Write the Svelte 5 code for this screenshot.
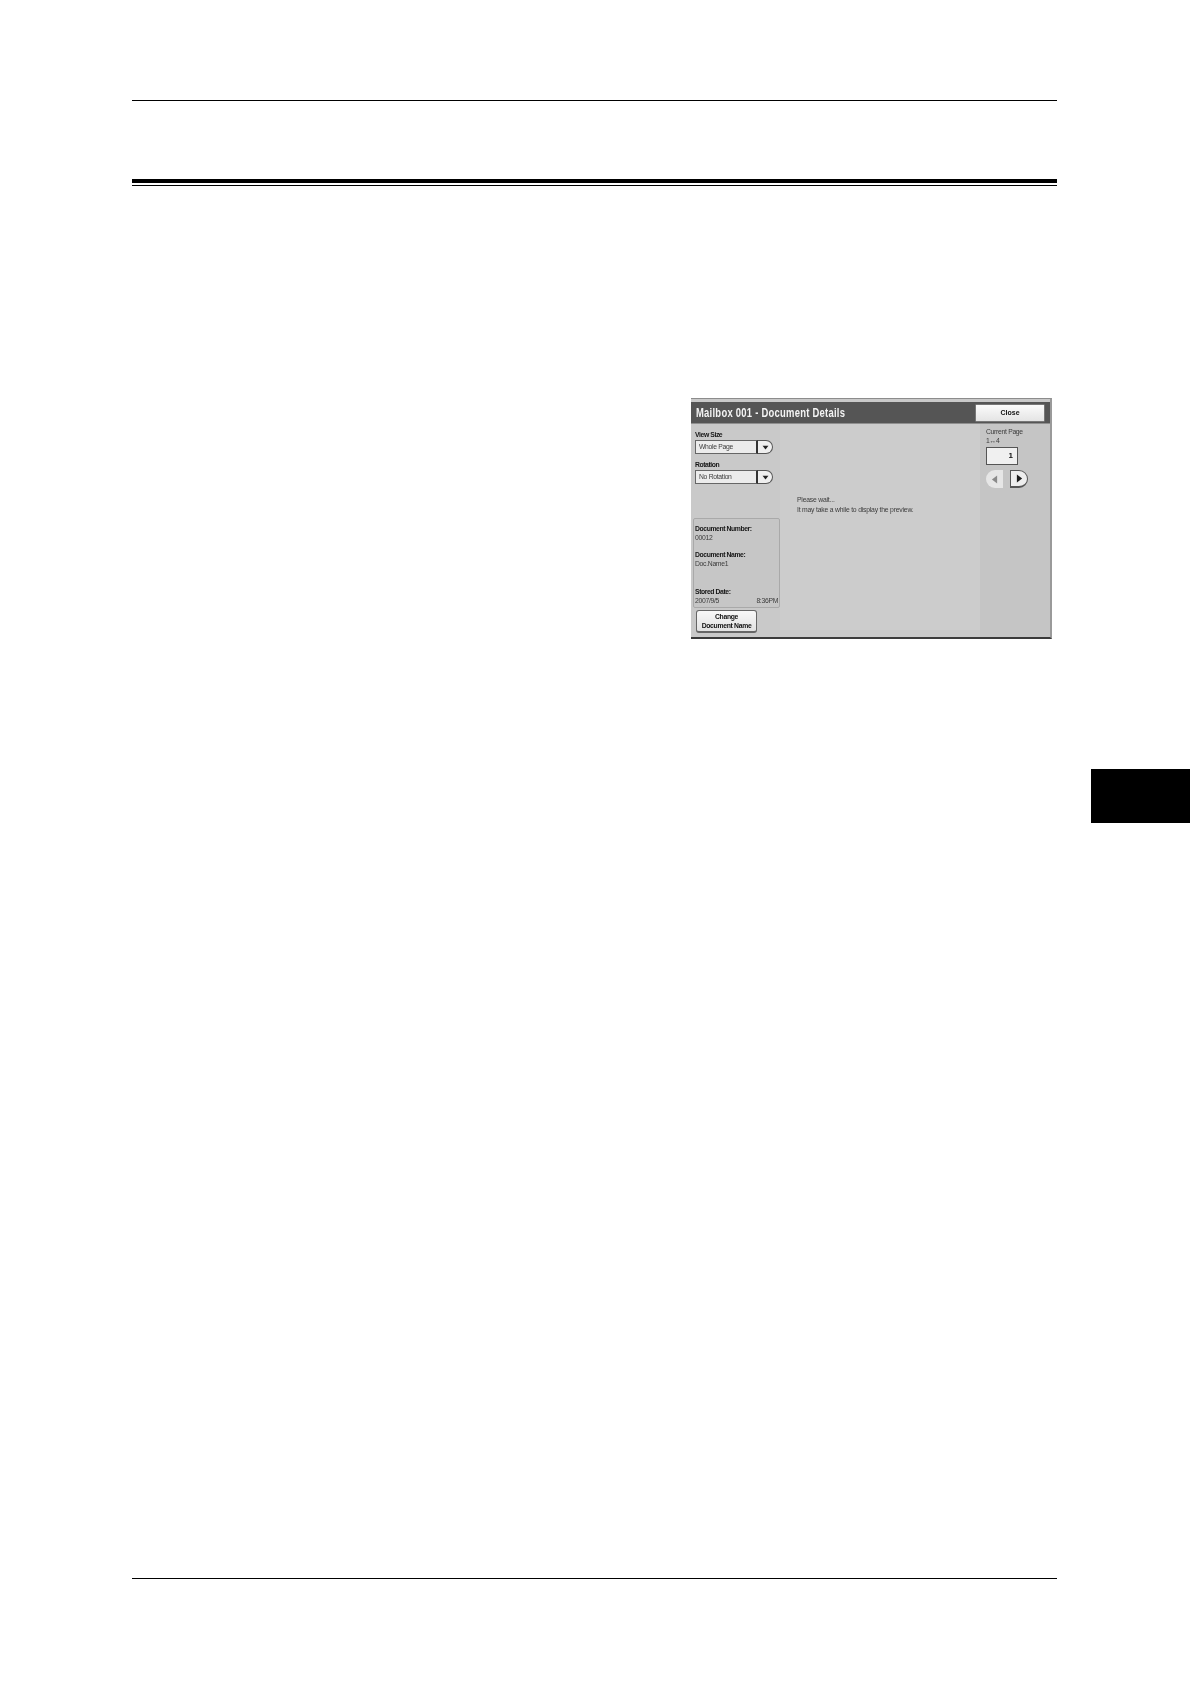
<script>
	const infoRows = [
		{ label: 'Document Number:', value: '00012', gap: 'gapSmall' },
		{ label: 'Document Name:', value: 'Doc.Name1', gap: 'gapLarge' }
	];
	const dropdowns = [
		{ label: 'View Size', value: 'Whole Page' },
		{ label: 'Rotation', value: 'No Rotation' }
	];
</script>

<div class="page">
	<div class="rule top"></div>
	<div class="rule heavy"></div>
	<div class="rule hair"></div>

	<div class="panel">
		<div class="titlebar">
			<span class="title">Mailbox 001 - Document Details</span>
			<button class="close">Close</button>
		</div>
		<div class="body">
			<div class="left">
				<div class="selects">
					{#each dropdowns as d}
						<div class="field">
							<div class="label">{d.label}</div>
							<div class="select">
								<span class="value">{d.value}</span>
								<span class="drop">
									<svg width="7" height="5" viewBox="0 0 8 6"><path d="M0.5 1h7L4 5.5z" fill="#222" /></svg>
								</span>
							</div>
						</div>
					{/each}
				</div>
				<div class="info">
					{#each infoRows as r}
						<div class="label">{r.label}</div>
						<div class="val {r.gap}">{r.value}</div>
					{/each}
					<div class="label">Stored Date:</div>
					<div class="val dates"><span>2007/9/5</span><span>8:36PM</span></div>
				</div>
				<button class="change">Change<br />Document Name</button>
			</div>
			<div class="preview">
				<div>Please wait...</div>
				<div>It may take a while to display the preview.</div>
			</div>
			<div class="right">
				<div class="val">Current Page</div>
				<div class="val">1↔4</div>
				<div class="pagebox">1</div>
				<div class="arrows">
					<span class="arrow off">
						<svg width="7" height="9" viewBox="0 0 8 10"><path d="M7 0.5v9L1 5z" fill="#8a8a8a" /></svg>
					</span>
					<span class="arrow on">
						<svg width="7" height="9" viewBox="0 0 8 10"><path d="M1 0.5v9L7 5z" fill="#1c1c1c" /></svg>
					</span>
				</div>
			</div>
		</div>
	</div>

	<div class="tab"></div>
	<div class="rule bottom"></div>
</div>

<style>
	:global(body) {
		margin: 0;
		background: #fff;
	}

	.page {
		height: 1684px;
		box-sizing: border-box;
		padding-top: 100px;
		font-family: "Liberation Sans", Arial, sans-serif;
		overflow: hidden;
	}

	.rule {
		margin-left: 132px;
		width: 925px;
		background: #000;
	}
	.top {
		height: 1px;
	}
	.heavy {
		height: 4px;
		margin-top: 78px;
	}
	.hair {
		height: 1px;
		margin-top: 2px;
	}
	.bottom {
		height: 1px;
		margin-top: 755px;
	}

	.panel {
		margin: 212px 0 0 691px;
		width: 361px;
		height: 241px;
		box-sizing: border-box;
		display: flex;
		flex-direction: column;
		background: #c9c9c9;
		border-top: 1px solid #8c8c8c;
		border-bottom: 2px solid #3a3a3a;
		border-right: 2px solid #9a9a9a;
		filter: blur(0.4px);
	}

	.titlebar {
		margin-top: 3px;
		height: 21px;
		display: flex;
		align-items: center;
		justify-content: space-between;
		background: #555;
		padding: 0 5px;
		border-bottom: 1px solid #8f8f8f;
	}
	.title {
		color: #f4f4f4;
		font-weight: 700;
		font-size: 13.5px;
		letter-spacing: 0.35px;
		white-space: nowrap;
		transform: scaleX(0.7);
		transform-origin: left center;
	}
	.close {
		width: 70px;
		height: 18px;
		padding: 0;
		background: linear-gradient(#fbfbfb, #e4e4e4);
		border: 1px solid #777;
		border-radius: 1px;
		font: 700 7px "Liberation Sans", sans-serif;
		color: #111;
	}

	.body {
		flex: 1;
		display: flex;
		min-height: 0;
	}

	.left {
		width: 89px;
		padding-left: 1px;
		box-sizing: border-box;
		display: flex;
		flex-direction: column;
	}
	.selects {
		padding: 6px 0 0 3px;
		height: 94px;
		box-sizing: border-box;
		display: flex;
		flex-direction: column;
		gap: 6px;
	}
	.label {
		font-size: 6.8px;
		font-weight: 700;
		line-height: 9px;
		letter-spacing: -0.4px;
		white-space: nowrap;
		color: #151515;
	}
	.val {
		font-size: 6.8px;
		line-height: 9px;
		letter-spacing: -0.3px;
		white-space: nowrap;
		color: #3c3c3c;
	}
	.select {
		display: flex;
		height: 14px;
		margin-top: 1px;
	}
	.value {
		width: 63px;
		box-sizing: border-box;
		background: #ececec;
		border: 1px solid #666;
		border-right: 2px solid #333;
		font-size: 6.8px;
		letter-spacing: -0.3px;
		line-height: 12px;
		padding-left: 3px;
		color: #3c3c3c;
	}
	.drop {
		width: 15px;
		box-sizing: border-box;
		background: #efefef;
		border: 1px solid #555;
		border-left: 0;
		border-radius: 0 7px 7px 0;
		display: flex;
		align-items: center;
		justify-content: center;
	}

	.info {
		margin-left: 1px;
		width: 87px;
		height: 90px;
		box-sizing: border-box;
		padding: 5px 1px 0 1px;
		border: 1px solid #a9a9a9;
		border-radius: 2px;
		background: #c6c6c6;
	}
	.gapSmall {
		margin-bottom: 8px;
	}
	.gapLarge {
		margin-bottom: 19px;
	}
	.dates {
		display: flex;
		justify-content: space-between;
	}
	.change {
		margin: 2px 0 0 4px;
		width: 61px;
		height: 23px;
		padding: 0;
		background: linear-gradient(#f8f8f8, #e2e2e2);
		border: 1px solid #666;
		border-bottom-width: 2px;
		border-radius: 3px;
		font: 700 6.8px/9px "Liberation Sans", sans-serif;
		letter-spacing: -0.3px;
		white-space: nowrap;
		color: #111;
	}

	.preview {
		width: 200px;
		box-sizing: border-box;
		padding: 71px 0 0 17px;
		background: #cccccc;
		margin-bottom: 7px;
		font-size: 6.8px;
		letter-spacing: -0.2px;
		line-height: 10px;
		color: #3c3c3c;
	}

	.right {
		flex: 1;
		padding: 3px 0 0 6px;
		background: #c5c5c5;
		display: flex;
		flex-direction: column;
	}
	.pagebox {
		margin-top: 2px;
		width: 32px;
		height: 18px;
		box-sizing: border-box;
		background: #f0f0f0;
		border: 1px solid #555;
		font-size: 8px;
		font-weight: 700;
		line-height: 16px;
		text-align: right;
		padding-right: 4px;
		color: #111;
	}
	.arrows {
		margin-top: 5px;
		display: flex;
		gap: 7px;
	}
	.arrow {
		width: 17px;
		height: 18px;
		box-sizing: border-box;
		display: flex;
		align-items: center;
		justify-content: center;
	}
	.off {
		background: #e6e6e6;
		border-radius: 9px 0 0 9px;
	}
	.on {
		width: 18px;
		background: #eee;
		border: 1px solid #555;
		border-bottom-width: 2px;
		border-radius: 0 9px 9px 0;
	}

	.tab {
		margin: 130px 0 0 1091px;
		width: 99px;
		height: 54px;
		background: #000;
	}
</style>
